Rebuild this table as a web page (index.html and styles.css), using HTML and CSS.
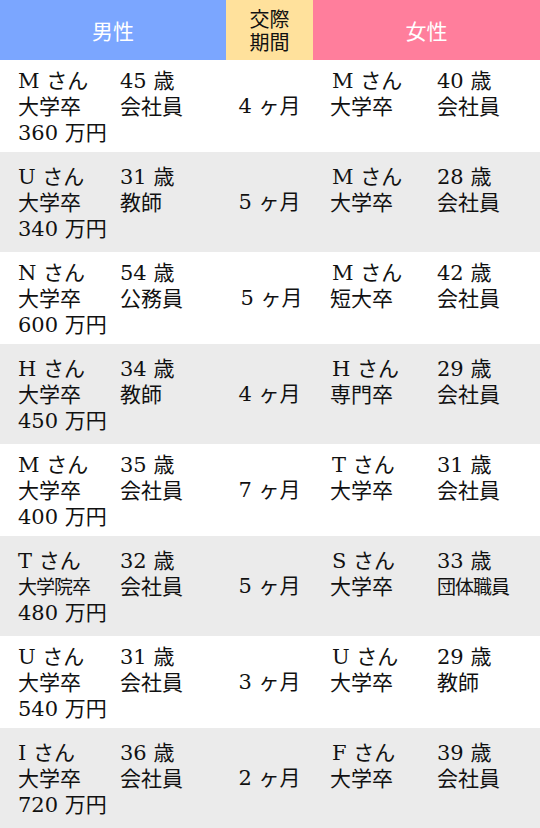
FILE: index.html
```html
<!DOCTYPE html>
<html lang="ja">
<head>
<meta charset="utf-8">
<link rel="stylesheet" href="styles.css">
</head>
<body>
<div class="table">
  <div class="head">
    <div class="h male">男性</div>
    <div class="h period-h"><span class="hl">交際</span><span class="hl">期間</span></div>
    <div class="h female">女性</div>
  </div>

  <div class="row odd">
    <div class="person left"><span>M さん</span><span>45 歳</span><span>大学卒</span><span>会社員</span><span class="wide">360 万円</span></div>
    <div class="period">4 ヶ月</div>
    <div class="person right"><span class="nm">M さん</span><span>40 歳</span><span>大学卒</span><span>会社員</span></div>
  </div>

  <div class="row even">
    <div class="person left"><span>U さん</span><span>31 歳</span><span>大学卒</span><span>教師</span><span class="wide">340 万円</span></div>
    <div class="period">5 ヶ月</div>
    <div class="person right"><span class="nm">M さん</span><span>28 歳</span><span>大学卒</span><span>会社員</span></div>
  </div>

  <div class="row odd">
    <div class="person left"><span>N さん</span><span>54 歳</span><span>大学卒</span><span>公務員</span><span class="wide">600 万円</span></div>
    <div class="period shift">5 ヶ月</div>
    <div class="person right"><span class="nm">M さん</span><span>42 歳</span><span>短大卒</span><span>会社員</span></div>
  </div>

  <div class="row even">
    <div class="person left"><span>H さん</span><span>34 歳</span><span>大学卒</span><span>教師</span><span class="wide">450 万円</span></div>
    <div class="period">4 ヶ月</div>
    <div class="person right"><span class="nm">H さん</span><span>29 歳</span><span>専門卒</span><span>会社員</span></div>
  </div>

  <div class="row odd">
    <div class="person left"><span>M さん</span><span>35 歳</span><span>大学卒</span><span>会社員</span><span class="wide">400 万円</span></div>
    <div class="period">7 ヶ月</div>
    <div class="person right"><span class="nm">T さん</span><span>31 歳</span><span>大学卒</span><span>会社員</span></div>
  </div>

  <div class="row even">
    <div class="person left"><span>T さん</span><span>32 歳</span><span class="small">大学院卒</span><span>会社員</span><span class="wide">480 万円</span></div>
    <div class="period">5 ヶ月</div>
    <div class="person right"><span class="nm">S さん</span><span>33 歳</span><span>大学卒</span><span class="small">団体職員</span></div>
  </div>

  <div class="row odd">
    <div class="person left"><span>U さん</span><span>31 歳</span><span>大学卒</span><span>会社員</span><span class="wide">540 万円</span></div>
    <div class="period">3 ヶ月</div>
    <div class="person right"><span class="nm">U さん</span><span>29 歳</span><span>大学卒</span><span>教師</span></div>
  </div>

  <div class="row even">
    <div class="person left"><span>I さん</span><span>36 歳</span><span>大学卒</span><span>会社員</span><span class="wide">720 万円</span></div>
    <div class="period">2 ヶ月</div>
    <div class="person right"><span class="nm">F さん</span><span>39 歳</span><span>大学卒</span><span>会社員</span></div>
  </div>
</div>
</body>
</html>
```

FILE: styles.css
```css
html, body {
  margin: 0;
  padding: 0;
  background: #ffffff;
}

.table {
  width: 540px;
  font-family: "DejaVu Serif", "Noto Sans CJK JP", serif;
  color: #111111;
  font-size: 21px;
}

.head {
  display: grid;
  grid-template-columns: 226px 87px 227px;
  height: 60px;
}

.h {
  display: flex;
  align-items: center;
  justify-content: center;
  text-align: center;
  font-family: "Noto Sans CJK JP", sans-serif;
  font-size: 21px;
}

.male {
  background: #7ba6ff;
  color: #ffffff;
}

.period-h {
  background: #ffe19c;
  color: #111111;
  font-size: 20px;
  flex-direction: column;
  gap: 1px;
}

.period-h .hl {
  display: block;
  line-height: 22px;
  height: 22px;
}

.female {
  background: #ff7e9c;
  color: #ffffff;
}

.row {
  display: grid;
  grid-template-columns: 226px 87px 227px;
  align-items: center;
}

.row.odd {
  height: 92px;
  background: #ffffff;
}

.row.even {
  height: 100px;
  background: #ebebeb;
}

.person {
  display: grid;
  grid-template-rows: repeat(3, 26px);
  line-height: 26px;
  white-space: nowrap;
  padding-top: 2px;
}

.person.left {
  grid-template-columns: 102px auto;
  padding-left: 18px;
}

.person.right {
  grid-template-columns: 107px auto;
  padding-left: 17px;
}

.person .wide {
  grid-column: 1 / 3;
}

.person .nm {
  padding-left: 2px;
}

.person .small {
  font-size: 19px;
  letter-spacing: -1px;
}

.period {
  text-align: center;
  line-height: 26px;
}

.period.shift {
  padding-left: 4px;
}
```
